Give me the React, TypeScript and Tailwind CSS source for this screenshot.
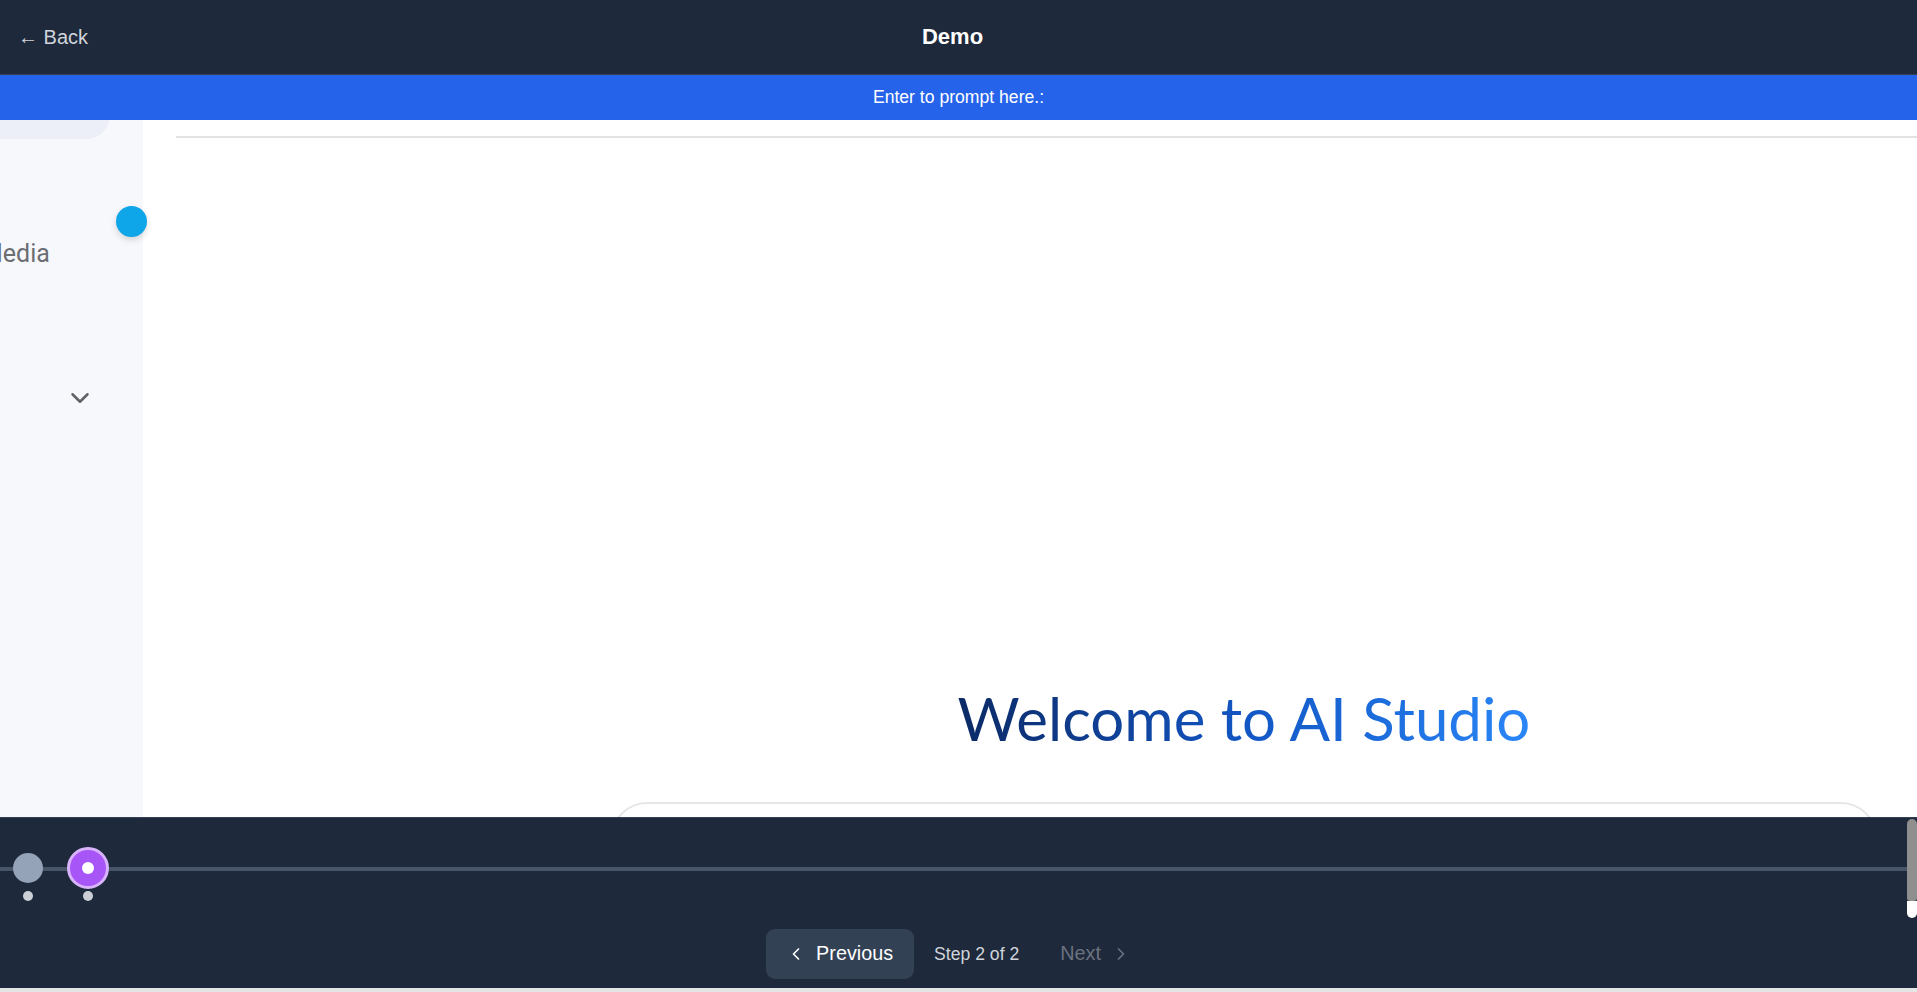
import React from "react";
import { ChevronDown, ChevronLeft, ChevronRight } from "lucide-react";

export default function App() {
  return (
    <div className="h-[992px] w-full flex flex-col bg-[#e5e5e5] overflow-hidden" style={{ fontFamily: '"Liberation Sans", Arial, sans-serif' }}>
      {/* Header */}
      <header className="h-[75px] shrink-0 bg-[#1e293b] border-b border-[#374151] flex items-center pl-[18px] pr-[20px]">
        <button className="text-[20px] text-[#d1d5db] leading-none">← Back</button>
        <div className="flex-1 flex justify-center pr-[80px]">
          <h1 className="text-[22px] font-bold text-white leading-none">Demo</h1>
        </div>
      </header>

      {/* Prompt bar */}
      <div className="h-[45px] shrink-0 bg-[#2563eb] flex items-center justify-center">
        <span className="text-[17.6px] text-white leading-none">Enter to prompt here.:</span>
      </div>

      {/* Screenshot region */}
      <div className="h-[697px] shrink-0 flex bg-white overflow-hidden relative">
        <aside className="w-[143px] shrink-0 bg-[#f7f8fc] flex flex-col relative">
          <div className="w-[110px] h-[48px] mt-[-29px] rounded-r-[24px] bg-[#eceef8]" />
          <div className="mt-[102px] ml-[-19px] text-[25px] text-[#6b6e72] leading-none" style={{ fontFamily: 'Roboto, sans-serif' }}>Media</div>
          <div className="mt-[117px] ml-[65px] text-[#5f6368]">
            <ChevronDown size={30} strokeWidth={2} />
          </div>
        </aside>
        <div className="absolute left-[116px] top-[86px] w-[31px] h-[31px] rounded-full bg-[#0ea5e9] shadow-[0_3px_6px_rgba(0,0,0,0.15)]" />
        <main className="flex-1 min-w-0 flex flex-col">
          <div className="ml-[33px] mt-[16px] border-t-2 border-[#e2e2e2]" />
          <div className="ml-[468px] w-[1266px] flex flex-col items-center">
            <h2
              className="mt-[550px] text-[60px] leading-none font-normal bg-gradient-to-r from-[#0b2a66] via-[#1256c4] to-[#2a86f7] bg-clip-text text-transparent blur-[0.4px]"
              style={{ fontFamily: 'Lato, "Open Sans", sans-serif' }}
            >
              Welcome to AI Studio
            </h2>
            <div className="mt-[54px] w-full h-[120px] rounded-[36px] border-2 border-[#e6e6e6]" />
          </div>
        </main>
      </div>

      {/* Bottom panel */}
      <div className="h-[171px] shrink-0 bg-[#1e293b] border-t border-[#334155] flex">
        <div className="flex-1 flex flex-col">
          <div className="relative h-[84px] mt-[29px]">
            <div className="absolute left-0 right-0 top-[20px] h-[4px] bg-[#475569]" />
            <div className="relative flex pl-[7px] gap-[18px]">
              <div className="flex flex-col items-center w-[42px]">
                <div className="h-[42px] flex items-center justify-center">
                  <div className="w-[30px] h-[30px] rounded-full bg-[#94a3b8]" />
                </div>
                <div className="mt-[2px] w-[10px] h-[10px] rounded-full bg-[#cbd0d6]" />
              </div>
              <div className="flex flex-col items-center w-[42px]">
                <div className="h-[42px] w-[42px] rounded-full bg-[#a855f7] border-[3px] border-[#d8b4fe] flex items-center justify-center">
                  <div className="w-[12px] h-[12px] rounded-full bg-white" />
                </div>
                <div className="mt-[2px] w-[10px] h-[10px] rounded-full bg-[#cbd0d6]" />
              </div>
            </div>
          </div>
          <div className="flex items-center justify-center gap-[20px] mt-[-2px] pl-[6px]">
            <button className="h-[50px] w-[148px] rounded-[9px] bg-[#334155] flex items-center pl-[20px] gap-[10px] text-white text-[19.8px]">
              <ChevronLeft size={20} strokeWidth={2} />
              <span>Previous</span>
            </button>
            <span className="text-[17.6px] text-[#d1d5db]">Step 2 of 2</span>
            <button className="h-[50px] flex items-center pl-[21px] pr-[16px] gap-[10px] text-[#6b7280] text-[19.8px]">
              <span>Next</span>
              <ChevronRight size={20} strokeWidth={2} />
            </button>
          </div>
        </div>
        <div className="w-[10px] shrink-0 flex flex-col pt-[1px]">
          <div className="h-[82px] rounded-t-[5px] rounded-b-[3px] bg-[#8f8f8f]" />
          <div className="h-[17px] rounded-b-[5px] bg-white" />
        </div>
      </div>
    </div>
  );
}
